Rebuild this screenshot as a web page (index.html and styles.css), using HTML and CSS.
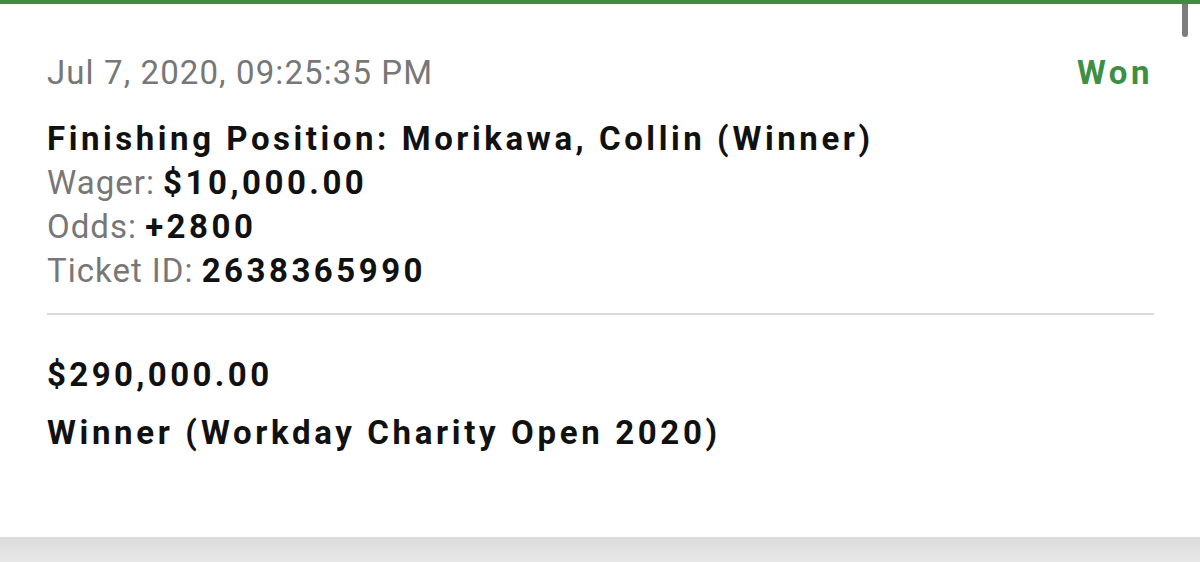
FILE: index.html
```html
<!DOCTYPE html>
<html lang="en">
<head>
    <meta charset="UTF-8">
    <title>Bet History</title>
    <link rel="stylesheet" href="styles.css">
</head>
<body>
    <div class="page">
        <div class="scroll-thumb"></div>
        <div class="ticket">
            <div class="ticket-head">
                <span class="ticket-date">Jul 7, 2020, 09:25:35 PM</span>
                <span class="ticket-status">Won</span>
            </div>
            <div class="ticket-body">
                <div class="ticket-title">Finishing Position: Morikawa, Collin (Winner)</div>
                <div class="ticket-row"><span class="label">Wager:</span> <span class="value">$10,000.00</span></div>
                <div class="ticket-row"><span class="label">Odds:</span> <span class="value">+2800</span></div>
                <div class="ticket-row"><span class="label">Ticket ID:</span> <span class="value">2638365990</span></div>
            </div>
            <hr class="divider">
            <div class="ticket-foot">
                <div class="payout">$290,000.00</div>
                <div class="market">Winner (Workday Charity Open 2020)</div>
            </div>
        </div>
        <div class="page-bottom"></div>
    </div>
</body>
</html>
```

FILE: styles.css
```css
/* Reset */
html, body {
    margin: 0;
    padding: 0;
    box-sizing: border-box;
    font-family: Roboto, "Liberation Sans", Arial, sans-serif;
    background: #fff;
}

.page {
    position: relative;
    height: 562px;
    overflow: hidden;
    border-top: 4px solid #3d8c42;
    box-sizing: border-box;
    display: flex;
    flex-direction: column;
}

/* scrollbar thumb overlay */
.scroll-thumb {
    position: absolute;
    top: -4px;
    right: 12px;
    width: 6px;
    height: 37px;
    border-radius: 3px;
    background: #7d7d7d;
}

/* Ticket card */
.ticket {
    flex: 1;
    padding: 47px 50px 0 47px;
    font-size: 33px;
    line-height: 44px;
}

.ticket-head {
    display: flex;
    justify-content: space-between;
    align-items: baseline;
}

.ticket-date {
    color: #777;
    letter-spacing: 1.1px;
}

.ticket-status {
    color: #3d8f45;
    font-weight: bold;
    letter-spacing: 3.5px;
    margin-right: -3px;
}

.ticket-body {
    margin-top: 22px;
}

.ticket-title {
    color: #111;
    font-weight: bold;
    letter-spacing: 3.55px;
}

.label {
    color: #777;
    letter-spacing: 1px;
}

.value {
    color: #111;
    font-weight: bold;
    letter-spacing: 3.5px;
}

.divider {
    border: none;
    height: 2px;
    background: #dadada;
    margin: 20px -4px 0 0;
}

.ticket-foot {
    padding-top: 38px;
    color: #111;
    font-weight: bold;
}

.payout {
    letter-spacing: 3.4px;
}

.market {
    margin-top: 14px;
    letter-spacing: 3.65px;
}

.page-bottom {
    height: 25px;
    background: linear-gradient(#dcdcdc, #e7e7e7);
}
```
